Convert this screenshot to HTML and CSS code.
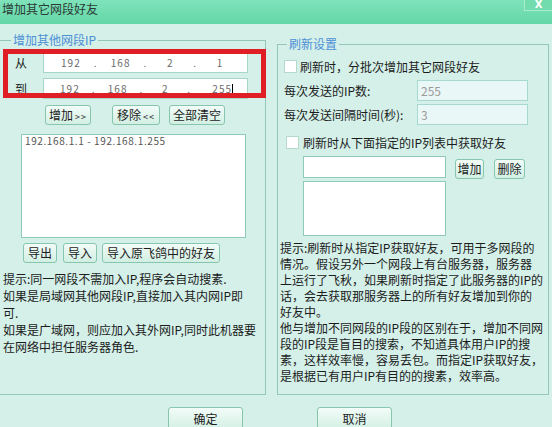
FILE: index.html
```html
<!DOCTYPE html>
<html lang="zh-CN">
<head>
<meta charset="utf-8">
<title>增加其它网段好友</title>
<link rel="stylesheet" href="styles.css">
</head>
<body>
<div class="window">
  <div class="titlebar">
    <div class="title">增加其它网段好友</div>
    <div class="close">X</div>
  </div>
  <div class="main">
    <fieldset class="group group-left">
      <legend>增加其他网段IP</legend>
      <div class="iprange">
        <div class="iprow">
          <span class="iplabel">从</span>
          <div class="ipbox">
            <span class="seg">192</span><span class="dot">.</span><span class="seg">168</span><span class="dot">.</span><span class="seg">2</span><span class="dot">.</span><span class="seg">1</span>
          </div>
        </div>
        <div class="iprow iprow2">
          <span class="iplabel">到</span>
          <div class="ipbox">
            <span class="seg">192</span><span class="dot">.</span><span class="seg">168</span><span class="dot">.</span><span class="seg">2</span><span class="dot">.</span><span class="seg seg-last">255<span class="caret"></span></span>
          </div>
        </div>
        <div class="redframe"></div>
      </div>
      <div class="btnrow btnrow1">
        <button class="btn b-add">增加<small>&gt;&gt;</small></button>
        <button class="btn b-rm">移除<small>&lt;&lt;</small></button>
        <button class="btn b-clr">全部清空</button>
      </div>
      <div class="listbox listbox-left">
        <div class="listitem">192.168.1.1 - 192.168.1.255</div>
      </div>
      <div class="btnrow btnrow2">
        <button class="btn b-exp">导出</button>
        <button class="btn b-imp">导入</button>
        <button class="btn b-imp2">导入原飞鸽中的好友</button>
      </div>
      <p class="tip tip-left">提示:同一网段不需加入IP,程序会自动搜素.<br>如果是局域网其他网段IP,直接加入其内网IP即<br>可.<br>如果是广域网，则应加入其外网IP,同时此机器要<br>在网络中担任服务器角色.</p>
    </fieldset>

    <fieldset class="group group-right">
      <legend>刷新设置</legend>
      <div class="cbrow cbrow1"><span class="checkbox"></span><span>刷新时，分批次增加其它网段好友</span></div>
      <div class="field field1"><span class="flabel">每次发送的IP数:</span><div class="finput">255</div></div>
      <div class="field field2"><span class="flabel">每次发送间隔时间(秒):</span><div class="finput">3</div></div>
      <div class="cbrow cbrow2"><span class="checkbox"></span><span>刷新时从下面指定的IP列表中获取好友</span></div>
      <div class="iplist-row">
        <div class="textbox"></div>
        <button class="btn b-add2">增加</button>
        <button class="btn b-del">删除</button>
      </div>
      <div class="listbox listbox-right"></div>
      <p class="tip tip-right">提示:刷新时从指定IP获取好友，可用于多网段的<br>情况。假设另外一个网段上有台服务器，服务器<br>上运行了飞秋，如果刷新时指定了此服务器的IP的<br>话，会去获取那服务器上的所有好友增加到你的<br>好友中。<br>他与增加不同网段的IP段的区别在于，增加不同网<br>段的IP段是盲目的搜索，不知道具体用户IP的搜<br>素，这样效率慢，容易丢包。而指定IP获取好友，<br>是根据已有用户IP有目的的搜素，效率高。</p>
    </fieldset>
  </div>
  <div class="footer">
    <button class="btn fbtn b-ok">确定</button>
    <button class="btn fbtn b-cancel">取消</button>
  </div>
</div>
</body>
</html>
```

FILE: styles.css
```css
* { box-sizing: border-box; }
html, body {
  margin: 0;
  padding: 0;
}
body {
  width: 552px;
  height: 427px;
  overflow: hidden;
  background: #d4f0e9;
  font-family: "Noto Sans CJK SC", "Microsoft YaHei", sans-serif;
  font-size: 12px;
  color: #1c1c1c;
}
.window {
  width: 552px;
  height: 427px;
  overflow: hidden;
}
.titlebar {
  height: 24px;
  background: linear-gradient(#7fe3bb, #63d7a6);
  display: flex;
  justify-content: space-between;
  align-items: flex-start;
}
.title {
  padding-left: 2px;
  line-height: 17px;
  color: #2a3a34;
}
.close {
  width: 28px;
  height: 11px;
  border-left: 1px solid #a8eccd;
  border-bottom: 1px solid #a8eccd;
  background: #72dcae;
  color: #ffffff;
  font-family: "DejaVu Sans", sans-serif;
  font-weight: bold;
  font-size: 10px;
  line-height: 9px;
  text-align: center;
  overflow: hidden;
}
.main {
  height: 371px;
  display: flex;
}
.group {
  margin: 0;
  padding: 0;
  border: 1px solid #93c7ba;
  min-width: 0;
}
.group legend {
  padding: 0 2px;
  line-height: 16px;
  color: #4d8fd6;
}
.group-left {
  margin-top: 8px;
  margin-left: -1px;
  width: 267px;
  position: relative;
}
.group-left legend { margin-left: 11px; }
.group-right {
  margin-top: 12px;
  margin-left: 11px;
  width: 272px;
}
.group-right legend { margin-left: 9px; }

/* IP range */
.iprange {
  position: relative;
  padding-top: 4px;
}
.iprow {
  display: flex;
  align-items: center;
  height: 21px;
}
.iprow2 { margin-top: 5px; }
.iplabel {
  width: 43px;
  padding-left: 15px;
}
.ipbox {
  width: 205px;
  height: 21px;
  background: #ffffff;
  border: 1px solid #a6d6c8;
  display: flex;
  align-items: center;
  padding: 0 6px;
  font-size: 10px;
  color: #6a6a6a;
  letter-spacing: 1px;
}
.seg {
  flex: 1;
  text-align: center;
}
.seg-last {
  text-align: right;
  padding-right: 8px;
}
.caret {
  display: inline-block;
  width: 1px;
  height: 12px;
  background: #000;
  vertical-align: middle;
}
.dot { width: 8px; text-align: center; }
.redframe {
  position: absolute;
  left: 3px;
  top: 1px;
  width: 263px;
  height: 49px;
  border: 5px solid #e01e26;
  pointer-events: none;
}

/* buttons */
.btn {
  font-family: inherit;
  font-size: 12px;
  color: #1c1c1c;
  height: 20px;
  padding: 0;
  margin: 0;
  background: linear-gradient(#f2fcf8, #d2efe3);
  border: 1px solid #86c6ae;
  border-radius: 3px;
  line-height: 18px;
}
.btn small {
  font-size: 9px;
  letter-spacing: 1px;
  margin-left: 2px;
}
.btnrow { display: flex; }
.btnrow1 { margin-top: 6px; }
.b-add { margin-left: 45px; width: 46px; }
.b-rm { margin-left: 21px; width: 48px; }
.b-clr { margin-left: 9px; width: 56px; }

.listbox {
  background: #ffffff;
  border: 1px solid #8fcab8;
  overflow: hidden;
}
.listbox-left {
  margin: 9px 0 0 21px;
  width: 225px;
  height: 104px;
}
.listitem {
  margin-top: 0;
  padding-left: 3px;
  font-size: 10px;
  line-height: 11px;
  letter-spacing: 0.6px;
  color: #555;
}
.btnrow2 { margin-top: 5px; }
.b-exp { margin-left: 23px; width: 34px; }
.b-imp { margin-left: 6px; width: 34px; }
.b-imp2 { margin-left: 5px; width: 118px; }

.tip {
  margin: 0;
  white-space: nowrap;
}
.tip-left {
  margin-top: 7px;
  padding-left: 3px;
  line-height: 17px;
}

/* right group */
.cbrow {
  display: flex;
  align-items: center;
  line-height: 17px;
}
.checkbox {
  width: 13px;
  height: 13px;
  background: #ffffff;
  border: 1px solid #b4dace;
  margin-right: 3px;
}
.cbrow1 { margin-top: 6px; padding-left: 6px; }
.cbrow2 { margin-top: 9px; padding-left: 8px; }
.cbrow2 .checkbox { margin-right: 4px; }
.field {
  display: flex;
  align-items: center;
  height: 21px;
}
.field1 { margin-top: 5px; }
.field2 { margin-top: 3px; }
.flabel {
  width: 139px;
  padding-left: 6px;
}
.finput {
  width: 111px;
  height: 21px;
  background: #e9f7f6;
  border: 1px solid #a6d9cf;
  color: #9a9a9a;
  padding-left: 3px;
  line-height: 19px;
}
.iplist-row {
  display: flex;
  align-items: flex-start;
  margin-top: 5px;
}
.textbox {
  margin-left: 25px;
  width: 143px;
  height: 22px;
  background: #ffffff;
  border: 1px solid #8fcab8;
}
.b-add2 { margin-left: 9px; margin-top: 3px; width: 29px; }
.b-del { margin-left: 10px; margin-top: 3px; width: 31px; }
.listbox-right {
  margin: 2px 0 0 25px;
  width: 143px;
  height: 55px;
}
.tip-right {
  margin-top: 4px;
  padding-left: 2px;
  line-height: 16px;
}

.footer {
  display: flex;
  padding-top: 12px;
}
.fbtn {
  width: 75px;
  height: 24px;
  line-height: 22px;
}
.b-ok { margin-left: 168px; }
.b-cancel { margin-left: 74px; }
```
